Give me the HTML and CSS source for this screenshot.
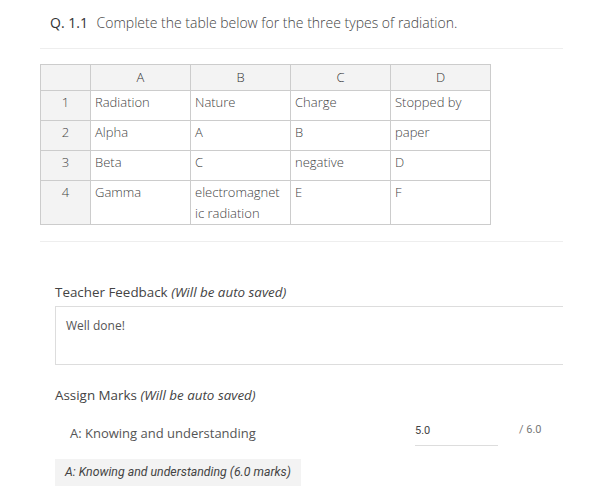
FILE: index.html
```html
<!DOCTYPE html>
<html>
<head>
<meta charset="utf-8">
<link rel="stylesheet" href="styles.css">
</head>
<body>
<div class="page">
  <div class="question">
    <span class="qnum">Q. 1.1</span>
    <span class="qtext">Complete the table below for the three types of radiation.</span>
  </div>
  <hr class="sep">
  <table class="grid">
    <tr class="head"><td class="idx"></td><td>A</td><td>B</td><td>C</td><td>D</td></tr>
    <tr><td class="idx">1</td><td>Radiation</td><td>Nature</td><td>Charge</td><td>Stopped by</td></tr>
    <tr><td class="idx">2</td><td>Alpha</td><td>A</td><td>B</td><td>paper</td></tr>
    <tr><td class="idx">3</td><td>Beta</td><td>C</td><td>negative</td><td>D</td></tr>
    <tr><td class="idx">4</td><td>Gamma</td><td>electromagnet ic radiation</td><td>E</td><td>F</td></tr>
  </table>
  <hr class="sep sep2">
  <div class="section">
    <div class="label">Teacher Feedback <em>(Will be auto saved)</em></div>
    <div class="feedback">Well done!</div>
    <div class="label marks-label">Assign Marks <em>(Will be auto saved)</em></div>
    <div class="mark-row">
      <div class="criterion">A: Knowing and understanding</div>
      <div class="score">5.0</div>
      <div class="outof">/ 6.0</div>
    </div>
    <div class="chip">A: Knowing and understanding (6.0 marks)</div>
  </div>
</div>
</body>
</html>
```
FILE: styles.css
```css
html, body { margin: 0; padding: 0; background: #fff; }
body { font-family: "Open Sans", "Liberation Sans", sans-serif; color: #555; }
.page { padding: 13px 37px 0 40px; }
.question { padding-left: 10px; font-size: 14px; line-height: 20px; font-weight: 300; }
.qnum { color: #333; font-weight: 500; margin-right: 5px; }
.qtext { color: #444; }
.sep { border: 0; border-top: 1px solid #eee; margin: 15px 0 15px 0; height: 0; }
.grid { border-collapse: collapse; font-size: 13px; font-weight: 300; color: #444; table-layout: fixed; }
.grid td { border: 1px solid #ccc; width: 100px; padding: 1px 4px 0; vertical-align: top; line-height: 21px; box-sizing: border-box; }
.grid td.idx { width: 50px; text-align: center; background: #f3f3f3; }
.grid tr.head td { background: #f3f3f3; text-align: center; height: 26px; line-height: 24px; padding-top: 0; color: #333; }
.grid tr:not(.head) td { height: 30px; }
.grid tr:last-child td { height: 43px; }
.sep2 { margin-top: 16px; margin-bottom: 0; }
.section { padding-left: 15px; }
.label { font-size: 13.4px; color: #444; font-weight: 500; margin-top: 41px; line-height: 18px; }
.feedback { border: 1px solid #ddd; border-right: 0; margin-top: 5px; height: 59px; padding: 10px 10px 0 10px; box-sizing: border-box; font-size: 12px; font-weight: 400; color: #555; }
.marks-label { margin-top: 21px; }
.mark-row { display: flex; align-items: flex-start; margin-top: 21px; padding-left: 15px; }
.criterion { font-size: 13px; color: #555; width: 345px; line-height: 16px; }
.score { font-family: Roboto, "Liberation Sans", sans-serif; font-size: 11px; color: #444; width: 83px; border-bottom: 1px solid #ddd; height: 21px; line-height: 12px; box-sizing: border-box; }
.outof { font-family: Roboto, "Liberation Sans", sans-serif; font-size: 11px; color: #777; margin-left: 21px; line-height: 12px; margin-top: -1px; }
.chip { display: inline-block; margin-top: 13px; background: #f3f3f3; font-family: Roboto, "Liberation Sans", sans-serif; font-style: italic; font-size: 12.3px; color: #444; padding: 0 10px; height: 27px; line-height: 27px; }
```
